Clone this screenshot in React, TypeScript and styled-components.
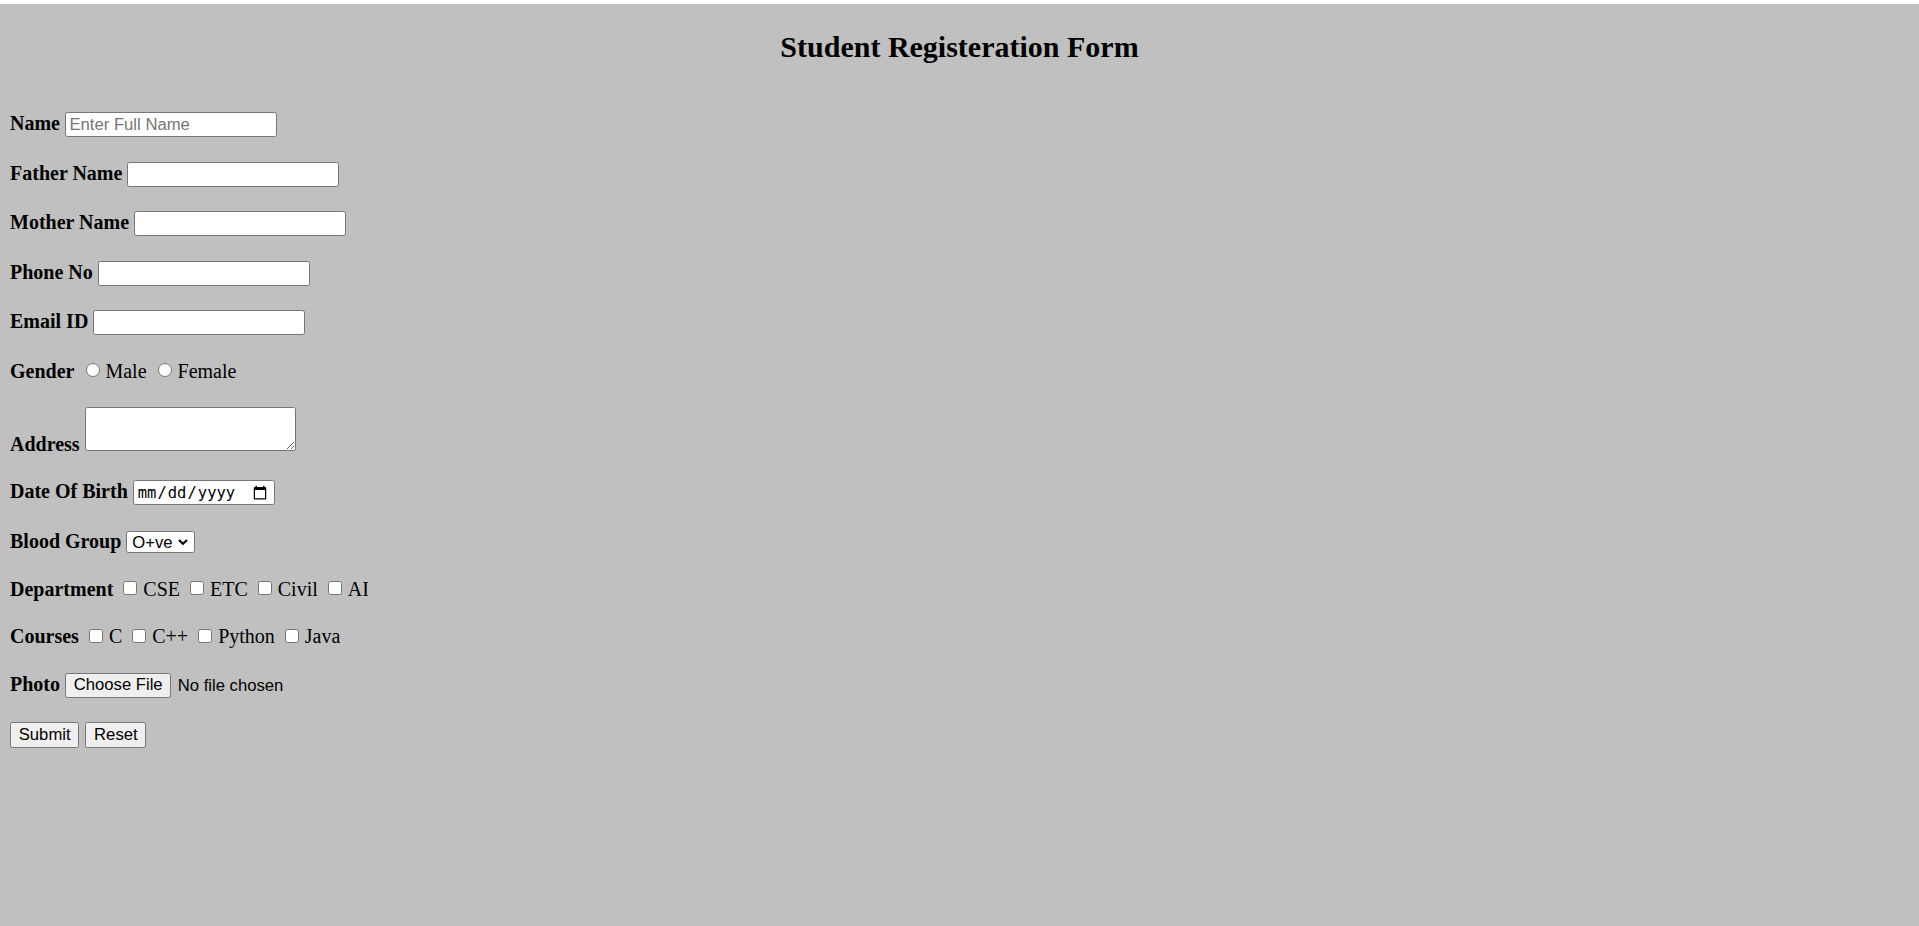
import React, { useState } from "react";
import styled, { createGlobalStyle } from "styled-components";

const GlobalStyle = createGlobalStyle`
  html, body {
    margin: 0;
    padding: 0;
    background: #ffffff;
  }
  body {
    font-family: "Liberation Serif", "Times New Roman", serif;
    color: #000000;
  }
  *, *::before, *::after {
    box-sizing: border-box;
  }
`;

const Page = styled.main`
  display: flow-root;
  margin-top: 4px;
  min-height: calc(100vh - 4px);
  padding: 26px 10px 40px;
  background: #c0c0c0;
`;

const Title = styled.h2`
  margin: 0 0 49px;
  font: bold 30px/33px "Liberation Serif", "Times New Roman", serif;
  text-align: center;
  color: #000;
`;

const Form = styled.form`
  display: flex;
  flex-direction: column;
  align-items: flex-start;
  gap: 24.5px;
`;

const Row = styled.div`
  display: flex;
  align-items: flex-start;
  gap: 5px;
  font-size: 20px;
  line-height: 23px;
`;

const FieldLabel = styled.label<{ $drop?: number }>`
  margin-top: ${(p) => p.$drop ?? 0}px;
  font: bold 20px/23px "Liberation Serif", "Times New Roman", serif;
  white-space: nowrap;
`;

const controlFont = `16.67px "Liberation Sans", Arial, sans-serif`;

const TextInput = styled.input`
  width: 212px;
  height: 25px;
  margin: 0;
  padding: 0 3.5px;
  border: 1px solid #767676;
  border-radius: 2.5px;
  background: #ffffff;
  font: ${controlFont};
  color: #000;
  &::placeholder {
    color: #757575;
  }
`;

const Option = styled.label`
  display: inline-flex;
  align-items: flex-start;
  font: 20px/23px "Liberation Serif", "Times New Roman", serif;
  white-space: nowrap;
  cursor: pointer;
`;

const Radio = styled.input.attrs({ type: "radio" })`
  appearance: none;
  flex: none;
  width: 14px;
  height: 14px;
  margin: 3.75px 5.5px 0 6.5px;
  border: 1px solid #767676;
  border-radius: 50%;
  background: #ffffff;
  cursor: pointer;
  &:checked {
    border: 4px solid #0075ff;
  }
`;

const Check = styled.input.attrs({ type: "checkbox" })`
  appearance: none;
  flex: none;
  width: 14px;
  height: 14px;
  margin: 3.5px 6px 0 5px;
  border: 1px solid #767676;
  border-radius: 2.5px;
  background: #ffffff;
  cursor: pointer;
  &:checked {
    border-color: #0075ff;
    background: #0075ff;
  }
`;

const TextArea = styled.textarea`
  width: 211.5px;
  height: 44px;
  margin: 0;
  padding: 2px 3px;
  border: 1px solid #767676;
  border-radius: 2.5px;
  background: #ffffff;
  font: ${controlFont};
`;

const DateInput = styled.input`
  width: 142px;
  height: 25px;
  margin: 0;
  padding: 0 4px 0 3px;
  border: 1px solid #767676;
  border-radius: 2.5px;
  background: #ffffff;
  font: 15.5px "DejaVu Sans Mono", "Liberation Mono", monospace;
  color: #000;
`;

const SelectWrap = styled.span`
  position: relative;
  display: inline-flex;
  margin-top: 1.5px;
`;

const Select = styled.select`
  appearance: none;
  width: 68.5px;
  height: 22px;
  margin: 0;
  padding: 0 20px 0 5px;
  border: 1px solid #767676;
  border-radius: 2.5px;
  background: #ffffff;
  font: ${controlFont};
  color: #000;
  cursor: pointer;
`;

const Chevron = styled.svg`
  position: absolute;
  right: 7px;
  top: 50%;
  width: 10px;
  height: 7px;
  transform: translateY(-50%);
  pointer-events: none;
`;

const FilePicker = styled.label`
  display: inline-flex;
  align-items: flex-start;
  gap: 6.4px;
  cursor: pointer;
`;

const HiddenFile = styled.input`
  display: none;
`;

const buttonLook = `
  display: inline-flex;
  align-items: center;
  height: 25px;
  padding: 0 7.75px;
  border: 1px solid #767676;
  border-radius: 2.5px;
  background: #efefef;
  font: 16.67px "Liberation Sans", Arial, sans-serif;
  color: #000;
  white-space: nowrap;
`;

const FileButton = styled.span`
  ${buttonLook}
`;

const FileStatus = styled.span`
  font: 16.67px/25px "Liberation Sans", Arial, sans-serif;
  color: #000;
  white-space: nowrap;
`;

const Actions = styled.div`
  display: flex;
  gap: 6px;
`;

const Button = styled.button`
  ${buttonLook}
  height: 25.5px;
  margin: 0;
  cursor: pointer;
`;

const textFields = [
  { id: "name", label: "Name", type: "text", placeholder: "Enter Full Name" },
  { id: "father", label: "Father Name", type: "text" },
  { id: "mother", label: "Mother Name", type: "text" },
  { id: "phone", label: "Phone No", type: "tel" },
  { id: "email", label: "Email ID", type: "email" },
];

const bloodGroups = ["A+ve", "A-ve", "B+ve", "B-ve", "AB+ve", "AB-ve", "O+ve", "O-ve"];
const departments = ["CSE", "ETC", "Civil", "AI"];
const courses = ["C", "C++", "Python", "Java"];

export default function App() {
  const [fileName, setFileName] = useState("");

  return (
    <>
      <GlobalStyle />
      <Page>
        <Title>Student Registeration Form</Title>
        <Form
          onSubmit={(e) => e.preventDefault()}
          onReset={() => setFileName("")}
        >
          {textFields.map((f) => (
            <Row key={f.id}>
              <FieldLabel htmlFor={f.id}>{f.label}</FieldLabel>
              <TextInput id={f.id} name={f.id} type={f.type} placeholder={f.placeholder} />
            </Row>
          ))}

          <Row>
            <FieldLabel as="span">Gender</FieldLabel>
            <Option>
              <Radio name="gender" value="male" />
              Male
            </Option>
            <Option>
              <Radio name="gender" value="female" />
              Female
            </Option>
          </Row>

          <Row>
            <FieldLabel htmlFor="address" $drop={25.75}>
              Address
            </FieldLabel>
            <TextArea id="address" name="address" />
          </Row>

          <Row>
            <FieldLabel htmlFor="dob">Date Of Birth</FieldLabel>
            <DateInput id="dob" name="dob" type="date" />
          </Row>

          <Row>
            <FieldLabel htmlFor="blood">Blood Group</FieldLabel>
            <SelectWrap>
              <Select id="blood" name="blood" defaultValue="O+ve">
                {bloodGroups.map((g) => (
                  <option key={g} value={g}>
                    {g}
                  </option>
                ))}
              </Select>
              <Chevron viewBox="0 0 10 7" aria-hidden="true">
                <path d="M1 1.5 L5 5.3 L9 1.5" fill="none" stroke="#000" strokeWidth="2.1" />
              </Chevron>
            </SelectWrap>
          </Row>

          <Row>
            <FieldLabel as="span">Department</FieldLabel>
            {departments.map((d) => (
              <Option key={d}>
                <Check name="department" value={d} />
                {d}
              </Option>
            ))}
          </Row>

          <Row>
            <FieldLabel as="span">Courses</FieldLabel>
            {courses.map((c) => (
              <Option key={c}>
                <Check name="courses" value={c} />
                {c}
              </Option>
            ))}
          </Row>

          <Row>
            <FieldLabel htmlFor="photo">Photo</FieldLabel>
            <FilePicker>
              <HiddenFile
                id="photo"
                name="photo"
                type="file"
                accept="image/*"
                onChange={(e) => setFileName(e.target.files?.[0]?.name ?? "")}
              />
              <FileButton>Choose File</FileButton>
              <FileStatus>{fileName || "No file chosen"}</FileStatus>
            </FilePicker>
          </Row>

          <Actions>
            <Button type="submit">Submit</Button>
            <Button type="reset">Reset</Button>
          </Actions>
        </Form>
      </Page>
    </>
  );
}
